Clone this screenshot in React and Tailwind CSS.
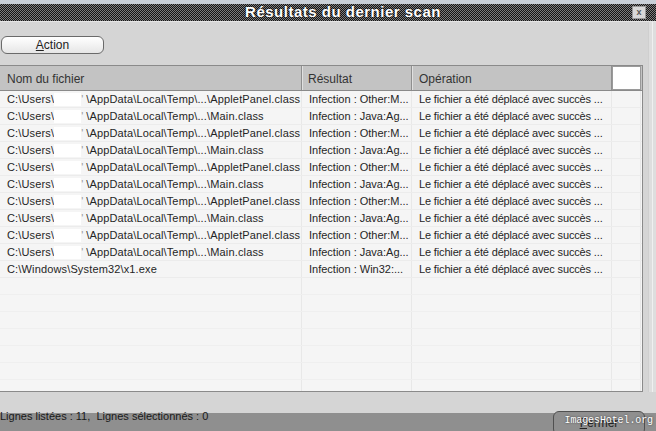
import React from 'react';

const rows = [
  { file: 'AppletPanel.class', result: 'Infection : Other:M...' },
  { file: 'Main.class', result: 'Infection : Java:Ag...' },
  { file: 'AppletPanel.class', result: 'Infection : Other:M...' },
  { file: 'Main.class', result: 'Infection : Java:Ag...' },
  { file: 'AppletPanel.class', result: 'Infection : Other:M...' },
  { file: 'Main.class', result: 'Infection : Java:Ag...' },
  { file: 'AppletPanel.class', result: 'Infection : Other:M...' },
  { file: 'Main.class', result: 'Infection : Java:Ag...' },
  { file: 'AppletPanel.class', result: 'Infection : Other:M...' },
  { file: 'Main.class', result: 'Infection : Java:Ag...' },
  { file: null, result: 'Infection : Win32:...' },
];

const emptyRows = Array.from({ length: 8 });

const Cell = ({ className = '', children }) => (
  <div className={`h-full flex items-center pl-[7px] border-r border-[#e8e8e8] whitespace-nowrap overflow-hidden ${className}`}>
    {children}
  </div>
);

export default function App() {
  return (
    <div
      className="w-[656px] h-[431px] overflow-hidden flex flex-col bg-[#d5d5d5] text-[#252525] text-[11px]"
      style={{ fontFamily: '"Liberation Sans", Arial, sans-serif' }}
    >
      {/* window top edge */}
      <div className="h-[4px] bg-[#c9d0d8] shrink-0" />

      {/* title bar */}
      <div className="relative h-[18px] shrink-0 flex items-center justify-center bg-[conic-gradient(#151515_25%,#7c7c7c_0_50%,#151515_0_75%,#7c7c7c_0)] bg-[length:2px_2px] border-b border-[#e6e6e6]">
        <span className="text-white font-bold text-[15px] tracking-[0.5px] ml-[30px] [text-shadow:0_0_2px_#000]">
          Résultats du dernier scan
        </span>
        <div className="absolute right-[10px] top-[2px] w-[14px] h-[13px] bg-[#d8d8d8] border border-[#9a9a9a] flex items-center justify-center text-[#555] text-[9px] font-bold leading-none">
          x
        </div>
      </div>

      <div className="flex flex-1 min-h-0">
        <div className="flex flex-col w-[648px]">
          {/* toolbar */}
          <div className="h-[43px] shrink-0 flex items-start pt-[14px] pl-[1px]">
            <button className="w-[103px] h-[18px] rounded-[6px] border border-[#6a6a6a] bg-gradient-to-b from-white to-[#e6e6e6] text-[12px] text-[#222] flex items-center justify-center">
              <span><span className="underline">A</span>ction</span>
            </button>
          </div>

          {/* list */}
          <div className="w-[643px] h-[327px] shrink-0 border border-[#8a8a8a] border-l-0 bg-[#f5f5f5] flex flex-col overflow-hidden">
            <div className="h-[25px] shrink-0 grid grid-cols-[302px_110px_200px_29px] bg-[#c3c3c3] border-b border-[#8a8a8a] text-[12px] text-[#333]">
              <div className="flex items-center pl-[7px] pt-[1px] border-r border-[#8f8f8f]">Nom du fichier</div>
              <div className="flex items-center pl-[5px] pt-[1px] border-r border-[#8f8f8f] border-l border-l-[#e0e0e0]">Résultat</div>
              <div className="flex items-center pl-[6px] pt-[1px] border-r border-[#8f8f8f] border-l border-l-[#e0e0e0]">Opération</div>
              <div className="bg-white border border-[#9a9a9a]" />
            </div>

            {rows.map((r, i) => (
              <div key={i} className="h-[17px] shrink-0 grid grid-cols-[302px_110px_200px_29px] border-b border-[#ececec]">
                <Cell className="tracking-[0.15px]">
                  {r.file ? (
                    <>
                      C:\Users\
                      <span className="inline-block w-[27px] h-[13px] bg-white" />
                      <span className="text-[#999] w-[5px] inline-block">'</span>
                      \AppData\Local\Temp\...\{r.file}
                    </>
                  ) : (
                    'C:\\Windows\\System32\\x1.exe'
                  )}
                </Cell>
                <Cell className="pl-[5px]">{r.result}</Cell>
                <Cell className="pl-[6px] tracking-[-0.15px]">Le fichier a été déplacé avec succès ...</Cell>
                <Cell />
              </div>
            ))}

            {emptyRows.map((_, i) => (
              <div key={`e${i}`} className="h-[17px] shrink-0 grid grid-cols-[302px_110px_200px_29px] border-b border-[#efefef]">
                <Cell />
                <Cell />
                <Cell />
                <Cell />
              </div>
            ))}
          </div>
        </div>

        {/* right window frame */}
        <div className="flex-1 bg-[#dedede] border-l border-[#cfcfcf] flex">
          <div className="w-[3px]" />
          <div className="w-px bg-[#f0f0f0]" />
        </div>
      </div>

      {/* status bar */}
      <div className="relative h-[39px] shrink-0 bg-[linear-gradient(#d5d5d5_0_21px,#8f8f8f_21px)] flex items-start">
        <span className="mt-[16px] text-[11px] text-[#1a1a1a] whitespace-pre">
          Lignes listées : 11,  Lignes sélectionnés : 0
        </span>
        <button className="absolute left-[553px] top-[19px] w-[92px] h-[24px] rounded-[6px] border border-[#505050] bg-[#8f8f8f] text-[12px] text-[#222] flex items-start justify-center pt-[2px]">
          <span><span className="underline">F</span>ermer</span>
        </button>
        <span
          className="absolute right-[3px] top-[21px] text-white text-[10px] tracking-[-0.1px] [text-shadow:0_0_2px_#333]"
          style={{ fontFamily: '"Liberation Mono", "DejaVu Sans Mono", monospace' }}
        >
          ImagesHotel.org
        </span>
      </div>
    </div>
  );
}
